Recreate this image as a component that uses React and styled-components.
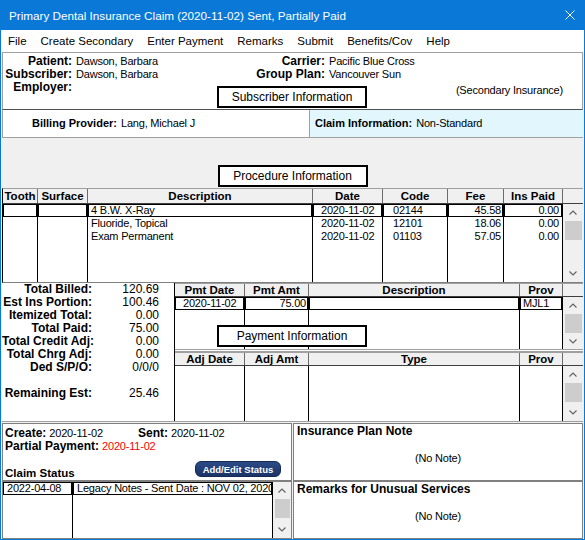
import React from "react";
import styled, { createGlobalStyle } from "styled-components";

const GlobalStyle = createGlobalStyle`
  html, body { margin: 0; padding: 0; background: #fff; }
  body { font-family: "Liberation Sans", Arial, sans-serif; }
`;

const Window = styled.div`
  width: 585px;
  height: 540px;
  box-sizing: border-box;
  display: flex;
  flex-direction: column;
  border: 1px solid #0a78d7;
  border-top: none;
  background: #f0f0f0;
  overflow: hidden;
  font-family: "Liberation Sans", Arial, sans-serif;
  color: #000;
`;

const TitleBar = styled.div`
  height: 30px;
  flex: 0 0 30px;
  background: #0a78d7;
  color: #fff;
  font-size: 11.7px;
  display: flex;
  align-items: center;
  justify-content: space-between;
  padding-left: 8px;
`;

const CloseIcon = styled.svg`
  width: 10px;
  height: 10px;
  margin-right: 9px;
`;

const MenuBar = styled.div`
  height: 22px;
  flex: 0 0 22px;
  background: #fff;
  display: flex;
  align-items: center;
  gap: 14px;
  padding-left: 7px;
  font-size: 11.5px;
`;

const Content = styled.div`
  flex: 1;
  display: flex;
  flex-direction: column;
  padding: 0 1px;
  min-height: 0;
`;

const PatientPanel = styled.div`
  height: 58px;
  flex: 0 0 58px;
  box-sizing: border-box;
  background: #fff;
  border: 1px solid #a0a0a0;
  border-bottom-color: #505050;
  padding-top: 2px;
  display: grid;
  grid-template-columns: 214px 150px 1fr;
  grid-template-rows: 13px 13px 1fr;
`;

const Fields = styled.div`
  grid-column: ${(p) => p.$col};
  grid-row: ${(p) => p.$row};
  display: grid;
  grid-template-columns: ${(p) => p.$label}px 1fr;
  grid-auto-rows: 13px;
  column-gap: 4px;
  align-content: start;
`;

const Label = styled.div`
  font-weight: bold;
  font-size: ${(p) => p.$size || 12}px;
  line-height: 13px;
  text-align: right;
  white-space: nowrap;
`;

const Value = styled.div`
  font-size: 11px;
  letter-spacing: -0.2px;
  line-height: 13px;
  white-space: nowrap;
  color: ${(p) => p.$color || "#000"};
`;

const Caption = styled.div`
  width: 150px;
  height: 22px;
  box-sizing: border-box;
  border: 2px solid #000;
  background: #fff;
  font-size: 12px;
  display: flex;
  align-items: center;
  justify-content: center;
  white-space: nowrap;
`;

const PanelCaption = styled(Caption)`
  grid-column: 2;
  grid-row: 3;
  align-self: end;
  margin-bottom: 1px;
`;

const SecondaryNote = styled(Value)`
  grid-column: 3;
  grid-row: 3;
  justify-self: end;
  margin: 3px 19px 0 0;
`;

const BillingRow = styled.div`
  height: 28px;
  flex: 0 0 28px;
  box-sizing: border-box;
  display: flex;
  background: #fff;
  border-left: 1px solid #a0a0a0;
  border-bottom: 1px solid #a0a0a0;
`;

const BillingCell = styled.div`
  box-sizing: border-box;
  display: flex;
  align-items: center;
  gap: 4px;
  flex: ${(p) => (p.$fill ? "1" : "0 0 306px")};
  padding-left: ${(p) => (p.$fill ? 5 : 29)}px;
  background: ${(p) => (p.$fill ? "#e1f7fd" : "#fff")};
  border-left: ${(p) => (p.$fill ? "1px solid #a0a0a0" : "none")};
`;

const CaptionStrip = styled.div`
  height: 50px;
  flex: 0 0 50px;
  box-sizing: border-box;
  display: flex;
  justify-content: center;
  align-items: flex-end;
  padding-bottom: 1px;
`;

const TableHead = styled.div`
  display: grid;
  grid-template-columns: ${(p) => p.$cols};
  height: ${(p) => p.$h}px;
  flex: 0 0 ${(p) => p.$h}px;
  box-sizing: border-box;
  background: #f0f0f0;
  border-top: 1px solid #a0a0a0;
  border-bottom: 1px solid #404040;
  border-left: ${(p) => (p.$edge ? "1px solid #000" : "none")};
`;

const HeadCell = styled.div`
  border-right: 1px solid #6b6b6b;
  font-weight: bold;
  font-size: 11.5px;
  line-height: ${(p) => p.$lh || 13}px;
  text-align: center;
  white-space: nowrap;
  overflow: hidden;
  &:last-child {
    border-right: none;
  }
`;

const TableBody = styled.div`
  display: grid;
  grid-template-columns: ${(p) => p.$cols};
  grid-template-rows: ${(p) => p.$rows};
  height: ${(p) => p.$h}px;
  flex: 0 0 ${(p) => p.$h}px;
  box-sizing: border-box;
  background: #fff;
  border-left: ${(p) => (p.$edge ? "1px solid #000" : "none")};
  border-bottom: ${(p) => (p.$bottom ? "1px solid #808080" : "none")};
`;

const Cell = styled.div`
  border-right: 1px solid #000;
  font-size: 11px;
  letter-spacing: -0.2px;
  line-height: 13px;
  padding: 0 ${(p) => p.$pr ?? 3}px 0 ${(p) => p.$pl ?? 3}px;
  text-align: ${(p) => (p.$right ? "right" : "left")};
  white-space: nowrap;
  overflow: hidden;
  box-shadow: ${(p) =>
    p.$sel ? "inset 1px 1px 0 #000, inset -1px -1px 0 #000" : "none"};
`;

const ScrollTrack = styled.div`
  grid-column: -2 / -1;
  grid-row: 1 / -1;
  background: #f0f0f0;
  display: flex;
  flex-direction: column;
`;

const ArrowBtn = styled.div`
  height: 17px;
  flex: 0 0 17px;
  display: flex;
  align-items: center;
  justify-content: center;
  margin-top: ${(p) => (p.$down ? "auto" : "0")};
`;

const Thumb = styled.div`
  height: 19px;
  flex: 0 0 19px;
  margin: 0 1px 0 2px;
  background: #cdcdcd;
`;

const LowerSection = styled.div`
  height: 138px;
  flex: 0 0 138px;
  display: flex;
  background: #fff;
`;

const Totals = styled.div`
  flex: 0 0 172px;
  display: grid;
  grid-template-columns: 90px 67px;
  grid-auto-rows: 13px;
  align-content: start;
`;

const TotalValue = styled.div`
  font-size: 12px;
  line-height: 13px;
  text-align: right;
`;

const PaymentArea = styled.div`
  flex: 1;
  position: relative;
  display: flex;
  flex-direction: column;
  border-left: 1px solid #000;
`;

const OverCaption = styled(Caption)`
  position: absolute;
  left: 42px;
  top: 42px;
`;

const DoubleRule = styled.div`
  height: 3px;
  flex: 0 0 3px;
  box-sizing: border-box;
  border-top: 1px solid #a0a0a0;
  border-bottom: 1px solid #a0a0a0;
  background: #fff;
`;

const BottomSection = styled.div`
  flex: 1;
  display: flex;
  gap: 1px;
  border-top: 1px solid #a0a0a0;
  padding-top: 1px;
  min-height: 0;
`;

const Column = styled.div`
  display: flex;
  flex-direction: column;
  flex: ${(p) => (p.$fill ? "1" : "0 0 290px")};
`;

const Box = styled.div`
  height: 58px;
  flex: 0 0 58px;
  box-sizing: border-box;
  border: 1px solid #808080;
  background: #fff;
  display: flex;
  flex-direction: column;
`;

const StatusInfo = styled(Box)`
  padding: 3px 0 0 2px;
`;

const InfoRow = styled.div`
  display: flex;
  align-items: center;
  gap: 3px;
  height: 13px;
`;

const InfoGroup = styled.div`
  display: flex;
  gap: 3px;
  width: ${(p) => (p.$w ? `${p.$w}px` : "auto")};
`;

const StatusFoot = styled.div`
  margin-top: auto;
  display: flex;
  justify-content: space-between;
  align-items: flex-end;
  padding-right: 10px;
`;

const StatusTitle = styled.div`
  font-weight: bold;
  font-size: 11.5px;
  line-height: 13px;
`;

const StatusButton = styled.button`
  width: 86px;
  height: 16px;
  margin-bottom: 3px;
  padding: 0;
  border: 1px solid #142a55;
  border-radius: 6px;
  background: linear-gradient(#2b4a86, #1b3468);
  color: #fff;
  font-family: "Liberation Sans", Arial, sans-serif;
  font-weight: bold;
  font-size: 9.5px;
  cursor: pointer;
`;

const StatusList = styled(TableBody)`
  border: 1px solid #808080;
  height: 58px;
  flex: 0 0 58px;
`;

const NoteTitle = styled.div`
  font-weight: bold;
  font-size: 12px;
  line-height: 13px;
  padding: 1px 3px;
`;

const NoNote = styled.div`
  font-size: 11px;
  letter-spacing: -0.2px;
  line-height: 13px;
  text-align: center;
  margin-top: 13px;
`;

const Chevron = ({ down }) => (
  <svg width="8" height="5" viewBox="0 0 8 5">
    <polyline
      points={down ? "0.5,0.5 4,4 7.5,0.5" : "0.5,4.5 4,1 7.5,4.5"}
      fill="none"
      stroke="#606060"
      strokeWidth="1.1"
    />
  </svg>
);

const Scroll = () => (
  <ScrollTrack>
    <ArrowBtn>
      <Chevron />
    </ArrowBtn>
    <Thumb />
    <ArrowBtn $down>
      <Chevron down />
    </ArrowBtn>
  </ScrollTrack>
);

const menu = ["File", "Create Secondary", "Enter Payment", "Remarks", "Submit", "Benefits/Cov", "Help"];

const procCols = "35px 50px 225px 70px 65px 56px 59px 1fr";
const procSpec = [{}, {}, {}, { pl: 8 }, { pl: 10 }, { right: true, pr: 2 }, { right: true, pr: 3 }];
const procRows = [
  ["", "", "4 B.W. X-Ray", "2020-11-02", "02144", "45.58", "0.00"],
  ["", "", "Fluoride, Topical", "2020-11-02", "12101", "18.06", "0.00"],
  ["", "", "Exam Permanent", "2020-11-02", "01103", "57.05", "0.00"],
];

const payCols = "70px 64px 211px 43px 1fr";
const paySpec = [{ pl: 8 }, { right: true, pr: 2 }, {}, { pl: 3 }];

const totals = [
  ["Total Billed:", "120.69"],
  ["Est Ins Portion:", "100.46"],
  ["Itemized Total:", "0.00"],
  ["Total Paid:", "75.00"],
  ["Total Credit Adj:", "0.00"],
  ["Total Chrg Adj:", "0.00"],
  ["Ded S/P/O:", "0/0/0"],
  ["", ""],
  ["Remaining Est:", "25.46"],
];

const DataRows = ({ rows, spec, select = 0 }) =>
  rows.map((row, r) =>
    row.map((v, c) => (
      <Cell
        key={`${r}-${c}`}
        $sel={r === select}
        $right={spec[c]?.right}
        $pl={spec[c]?.pl}
        $pr={spec[c]?.pr}
      >
        {v}
      </Cell>
    ))
  );

const Filler = ({ n }) => Array.from({ length: n }, (_, i) => <Cell key={`f${i}`} />);

export default function App() {
  return (
    <>
      <GlobalStyle />
      <Window>
        <TitleBar>
          <span>Primary Dental Insurance Claim (2020-11-02) Sent, Partially Paid</span>
          <CloseIcon viewBox="0 0 10 10">
            <path d="M0.5 0.5 L9.5 9.5 M9.5 0.5 L0.5 9.5" stroke="#fff" strokeWidth="1" />
          </CloseIcon>
        </TitleBar>
        <MenuBar>
          {menu.map((m) => (
            <span key={m}>{m}</span>
          ))}
        </MenuBar>
        <Content>
          <PatientPanel>
            <Fields $col="1" $row="1 / 4" $label={69}>
              <Label>Patient:</Label>
              <Value>Dawson, Barbara</Value>
              <Label>Subscriber:</Label>
              <Value>Dawson, Barbara</Value>
              <Label>Employer:</Label>
              <Value />
            </Fields>
            <Fields $col="2 / 4" $row="1 / 3" $label={108}>
              <Label>Carrier:</Label>
              <Value>Pacific Blue Cross</Value>
              <Label>Group Plan:</Label>
              <Value>Vancouver Sun</Value>
            </Fields>
            <PanelCaption>Subscriber Information</PanelCaption>
            <SecondaryNote>(Secondary Insurance)</SecondaryNote>
          </PatientPanel>

          <BillingRow>
            <BillingCell>
              <Label $size={11}>Billing Provider:</Label>
              <Value>Lang, Michael J</Value>
            </BillingCell>
            <BillingCell $fill>
              <Label $size={11}>Claim Information:</Label>
              <Value>Non-Standard</Value>
            </BillingCell>
          </BillingRow>

          <CaptionStrip>
            <Caption>Procedure Information</Caption>
          </CaptionStrip>

          <TableHead $cols={procCols} $h={16} $edge>
            {["Tooth", "Surface", "Description", "Date", "Code", "Fee", "Ins Paid", ""].map((h, i) => (
              <HeadCell key={i} $lh={14}>
                {h}
              </HeadCell>
            ))}
          </TableHead>
          <TableBody $cols={procCols} $rows="13px 13px 13px 1fr" $h={79} $edge $bottom>
            <Scroll />
            <DataRows rows={procRows} spec={procSpec} />
            <Filler n={7} />
          </TableBody>

          <LowerSection>
            <Totals>
              {totals.map(([l, v], i) => (
                <React.Fragment key={i}>
                  <Label>{l}</Label>
                  <TotalValue>{v}</TotalValue>
                </React.Fragment>
              ))}
            </Totals>
            <PaymentArea>
              <TableHead $cols={payCols} $h={14}>
                {["Pmt Date", "Pmt Amt", "Description", "Prov", ""].map((h, i) => (
                  <HeadCell key={i} $lh={12}>
                    {h}
                  </HeadCell>
                ))}
              </TableHead>
              <TableBody $cols={payCols} $rows="13px 1fr" $h={52}>
                <Scroll />
                <DataRows rows={[["2020-11-02", "75.00", "", "MJL1"]]} spec={paySpec} />
                <Filler n={4} />
              </TableBody>
              <DoubleRule />
              <TableHead $cols={payCols} $h={14}>
                {["Adj Date", "Adj Amt", "Type", "Prov", ""].map((h, i) => (
                  <HeadCell key={i} $lh={12}>
                    {h}
                  </HeadCell>
                ))}
              </TableHead>
              <TableBody $cols={payCols} $rows="1fr" $h={55}>
                <Scroll />
                <Filler n={4} />
              </TableBody>
              <OverCaption>Payment Information</OverCaption>
            </PaymentArea>
          </LowerSection>

          <BottomSection>
            <Column>
              <StatusInfo>
                <InfoRow>
                  <InfoGroup $w={130}>
                    <Label>Create:</Label>
                    <Value>2020-11-02</Value>
                  </InfoGroup>
                  <InfoGroup>
                    <Label>Sent:</Label>
                    <Value>2020-11-02</Value>
                  </InfoGroup>
                </InfoRow>
                <InfoRow>
                  <Label>Partial Payment:</Label>
                  <Value $color="#ff0000">2020-11-02</Value>
                </InfoRow>
                <StatusFoot>
                  <StatusTitle>Claim Status</StatusTitle>
                  <StatusButton>Add/Edit Status</StatusButton>
                </StatusFoot>
              </StatusInfo>
              <StatusList $cols="70px 200px 1fr" $rows="13px 1fr" $h={58}>
                <Scroll />
                <DataRows
                  rows={[["2022-04-08", "Legacy Notes - Sent Date : NOV 02, 2020"]]}
                  spec={[{ pl: 4 }, { pl: 4 }]}
                />
                <Filler n={2} />
              </StatusList>
            </Column>
            <Column $fill>
              <Box>
                <NoteTitle>Insurance Plan Note</NoteTitle>
                <NoNote>(No Note)</NoNote>
              </Box>
              <Box>
                <NoteTitle>Remarks for Unusual Services</NoteTitle>
                <NoNote>(No Note)</NoNote>
              </Box>
            </Column>
          </BottomSection>
        </Content>
      </Window>
    </>
  );
}
